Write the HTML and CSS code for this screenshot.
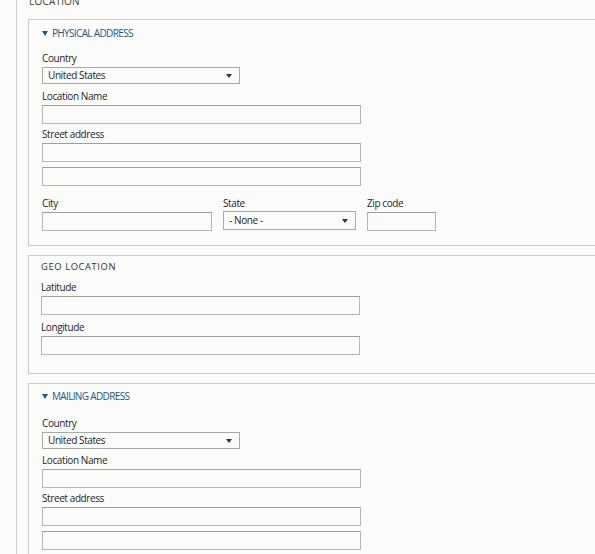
FILE: index.html
```html
<!DOCTYPE html>
<html>
<head>
<meta charset="utf-8">
<link rel="stylesheet" href="styles.css">
</head>
<body>
<div class="outer">
  <div class="outer-title">LOCATION</div>

  <section class="box box-first">
    <div class="legend legend-link"><span class="tri"></span>PHYSICAL ADDRESS</div>
    <div class="field">
      <div class="label">Country</div>
      <div class="select w-country"><span>United States</span><span class="arrow"></span></div>
    </div>
    <div class="field gap-lg">
      <div class="label">Location Name</div>
      <div class="input w-wide"></div>
    </div>
    <div class="field gap-sm">
      <div class="label">Street address</div>
      <div class="input w-wide"></div>
      <div class="input w-wide second"></div>
    </div>
    <div class="row">
      <div class="field">
        <div class="label">City</div>
        <div class="input w-city"></div>
      </div>
      <div class="field">
        <div class="label">State</div>
        <div class="select w-state up"><span>- None -</span><span class="arrow"></span></div>
      </div>
      <div class="field">
        <div class="label">Zip code</div>
        <div class="input w-zip"></div>
      </div>
    </div>
  </section>

  <section class="box box-geo">
    <div class="legend legend-plain">GEO LOCATION</div>
    <div class="field">
      <div class="label">Latitude</div>
      <div class="input w-wide"></div>
    </div>
    <div class="field gap-lg">
      <div class="label">Longitude</div>
      <div class="input w-wide"></div>
    </div>
  </section>

  <section class="box box-mail">
    <div class="legend legend-link"><span class="tri"></span>MAILING ADDRESS</div>
    <div class="field">
      <div class="label">Country</div>
      <div class="select w-country"><span>United States</span><span class="arrow"></span></div>
    </div>
    <div class="field">
      <div class="label">Location Name</div>
      <div class="input w-wide"></div>
    </div>
    <div class="field gap-sm">
      <div class="label">Street address</div>
      <div class="input w-wide"></div>
      <div class="input w-wide second"></div>
    </div>
  </section>
</div>
</body>
</html>
```

FILE: styles.css
```css
html, body {
  margin: 0;
  padding: 0;
  background: #fbfbf9;
  overflow: hidden;
}
body {
  font-family: "Open Sans", "Noto Sans", sans-serif;
  font-size: 10px;
  letter-spacing: -0.4px;
  color: #262626;
  height: 554px;
}
.outer {
  margin-top: -6px;
  margin-left: 16px;
  width: 640px;
  border-left: 1px solid #cfcfcf;
  padding-left: 11px;
  height: 600px;
}
.outer-title {
  line-height: 14px;
  padding-left: 1px;
  color: #444;
  letter-spacing: 0.2px;
  margin-bottom: 11px;
}
.box {
  border: 1px solid #cacaca;
  padding: 6px 0 14px 13px;
  margin-bottom: 9px;
}
.box-geo {
  padding: 4px 0 18px 12px;
}
.box-mail {
  padding-top: 5px;
}
.legend {
  line-height: 14px;
  margin-bottom: 11px;
  display: flex;
  align-items: center;
}
.legend-link {
  color: #1a5a8c;
  font-size: 10px;
  letter-spacing: -0.65px;
}
.legend-plain {
  color: #333;
  font-size: 9.4px;
  letter-spacing: 0.6px;
  margin-bottom: 6px;
}
.box-mail .legend {
  margin-bottom: 13px;
}
.tri {
  width: 0;
  height: 0;
  border-left: 3px solid transparent;
  border-right: 3px solid transparent;
  border-top: 5px solid #1a5a8c;
  margin-left: 0;
  margin-right: 4px;
}
.field + .field {
  margin-top: 4px;
}
.field + .field.gap-lg {
  margin-top: 5px;
}
.field + .field.gap-sm {
  margin-top: 3px;
}
.label {
  line-height: 14px;
  margin-bottom: 2px;
}
.input, .select {
  box-sizing: border-box;
  height: 19px;
  border: 1px solid #b6b6b6;
  border-top-color: #9f9f9f;
  background: #fbfbf9;
}
.select {
  height: 17px;
  display: flex;
  align-items: center;
  justify-content: space-between;
  padding: 0 7px 0 5px;
  border-color: #a9a9a9;
  line-height: 15px;
}
.arrow {
  width: 0;
  height: 0;
  border-left: 3px solid transparent;
  border-right: 3px solid transparent;
  border-top: 4px solid #333;
}
.second {
  margin-top: 5px;
}
.w-country { width: 198px; }
.w-wide { width: 319px; }
.w-city { width: 170px; }
.w-state { width: 133px; height: 19px; }
.w-zip { width: 69px; }
.row {
  display: flex;
  gap: 11px;
  margin-top: 10px;
}
.row .field + .field { margin-top: 0; }
.up { margin-top: -1px; }
```
